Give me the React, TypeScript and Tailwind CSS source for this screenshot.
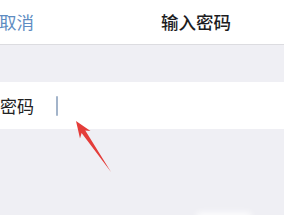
export default function App() {
  return (
    <div
      className="relative h-[215px] w-[284px] overflow-hidden bg-[#efeff4]"
      style={{ fontFamily: '"Noto Sans CJK SC", "Noto Sans", sans-serif' }}
    >
      <header className="flex h-[45px] items-center border-b border-[#dcdce0] bg-white">
        <span className="ml-[-1px] text-[17.5px] leading-none text-[#5e8cc2]">取消</span>
        <span className="ml-[127px] text-[17.5px] font-medium leading-none text-[#1c1c1e]">输入密码</span>
      </header>

      <div className="h-[37px]" />

      <div className="flex h-[47px] items-center bg-white">
        <span className="text-[17px] leading-none text-[#222]">密码</span>
        <span className="ml-[22px] h-[20px] w-[2px] rounded-full bg-[#a3b4ca]" />
      </div>

      <div className="absolute bottom-[-7px] left-[196px] h-[10px] w-[56px] rounded-full bg-white/80 blur-[3px]" />

      <svg className="absolute left-0 top-0" width="284" height="215" viewBox="0 0 284 215">
        <polygon
          points="76,121 90.5,131 85.3,130.5 111,172 81.6,133 80,138.5"
          fill="#e43d3a"
        />
      </svg>
    </div>
  );
}
